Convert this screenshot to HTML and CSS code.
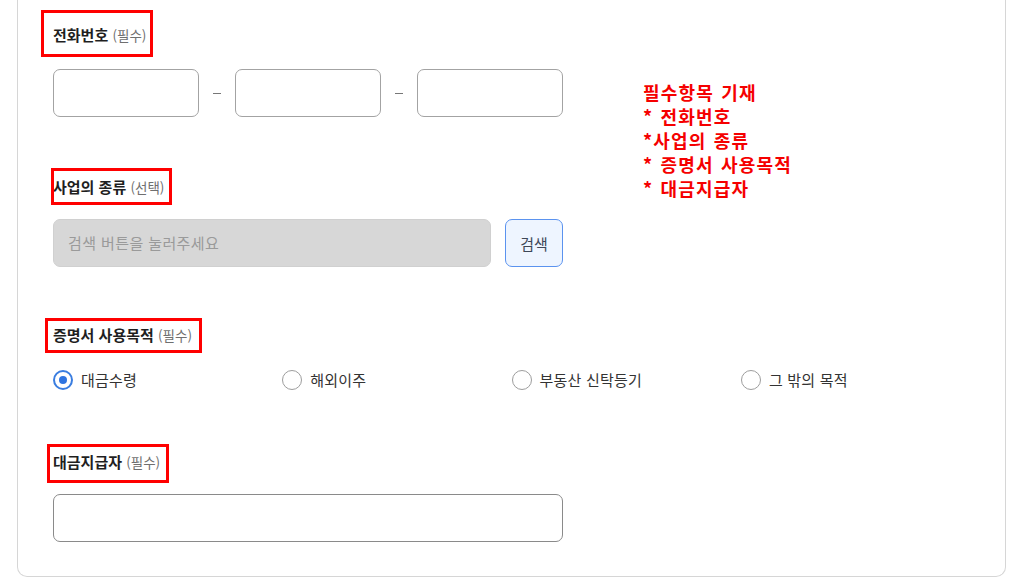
FILE: index.html
```html
<!DOCTYPE html>
<html lang="ko">
<head>
<meta charset="utf-8">
<title>신청서</title>
<link rel="stylesheet" href="styles.css">
</head>
<body>
<div class="card">
  <div class="top">
    <div class="left">
      <section class="sec sec-phone">
        <div class="label"><span class="lbl">전화번호 <small>(필수)</small><i class="mark m1"></i></span></div>
        <div class="phone">
          <input class="field" type="text">
          <span class="dash"></span>
          <input class="field" type="text">
          <span class="dash"></span>
          <input class="field" type="text">
        </div>
      </section>
      <section class="sec sec-biz">
        <div class="label"><span class="lbl">사업의 종류 <small>(선택)</small><i class="mark m2"></i></span></div>
        <div class="search">
          <div class="search-input">검색 버튼을 눌러주세요</div>
          <button class="search-btn" type="button">검색</button>
        </div>
      </section>
    </div>
    <div class="note">
      <p>필수항목 기재</p>
      <p>* 전화번호</p>
      <p>*사업의 종류</p>
      <p>* 증명서 사용목적</p>
      <p>* 대금지급자</p>
    </div>
  </div>
  <section class="sec sec-purpose">
    <div class="label"><span class="lbl">증명서 사용목적 <small>(필수)</small><i class="mark m3"></i></span></div>
    <div class="radios">
      <label class="radio checked"><span class="dot"></span>대금수령</label>
      <label class="radio"><span class="dot"></span>해외이주</label>
      <label class="radio"><span class="dot"></span>부동산 신탁등기</label>
      <label class="radio"><span class="dot"></span>그 밖의 목적</label>
    </div>
  </section>
  <section class="sec sec-payer">
    <div class="label"><span class="lbl">대금지급자 <small>(필수)</small><i class="mark m4"></i></span></div>
    <input class="field wide" type="text">
  </section>
</div>
</body>
</html>
```

FILE: styles.css
```css
* { box-sizing: border-box; }
html, body { margin: 0; padding: 0; background: #fff; }
body {
  font-family: "Noto Sans CJK KR", "Noto Sans", sans-serif;
  color: #222;
  width: 1024px;
  height: 579px;
  overflow: hidden;
}
.card {
  margin-left: 17px;
  width: 989px;
  border: 1px solid #d6d6d6;
  border-top: none;
  border-radius: 0 0 10px 10px;
  padding: 23px 35px 34px 35px;
}
.top { display: flex; }
.left { width: 510px; }
.label { height: 22px; line-height: 22px; }
.lbl {
  position: relative;
  display: inline-block;
  font-size: 15px;
  font-weight: 700;
  color: #1f1f1f;
}
.lbl small {
  font-size: 13.5px;
  font-weight: 400;
  color: #6f6f6f;
}
.mark {
  position: absolute;
  border: 3px solid #f00;
  pointer-events: none;
}
.m1 { left: -12px; top: -14px; width: 112px; height: 47px; }
.m2 { left: -2px; top: -8px; width: 121px; height: 37px; }
.m3 { left: -8px; top: -6px; width: 157px; height: 35px; }
.m4 { left: -6px; top: -7px; width: 122px; height: 39px; }

.field {
  display: block;
  height: 48px;
  border: 1px solid #a3a3a3;
  border-radius: 7px;
  background: #fff;
  padding: 0 12px;
  font: inherit;
  outline: none;
}
.phone { display: flex; align-items: center; margin-top: 24px; }
.phone .field { width: 146px; }
.dash {
  width: 36px;
  display: flex;
  justify-content: center;
}
.dash::before {
  content: "";
  width: 8px;
  height: 1px;
  background: #777;
}
.sec-biz { margin-top: 58px; }
.search { display: flex; gap: 14px; margin-top: 22px; }
.search-input {
  width: 438px;
  height: 48px;
  border-radius: 7px;
  background: #d7d7d7;
  border: 1px solid #d0d0d0;
  color: #9a9a9a;
  font-size: 15px;
  letter-spacing: 0.4px;
  line-height: 46px;
  padding-left: 14px;
}
.search-btn {
  width: 58px;
  height: 48px;
  border: 1px solid #5b93ef;
  border-radius: 7px;
  background: #eef5ff;
  color: #3d4757;
  font-family: inherit;
  font-size: 15px;
  padding: 0;
}
.note {
  margin-left: 80px;
  margin-top: 57px;
  color: #f50000;
  font-size: 18px;
  font-weight: 700;
  line-height: 24px;
  letter-spacing: 1.2px;
  word-spacing: 1px;
}
.note p { margin: 0; }

.sec-purpose { margin-top: 56px; }
.radios {
  display: grid;
  grid-template-columns: repeat(4, 229.3px);
  margin-top: 24px;
  height: 22px;
}
.radio {
  display: flex;
  align-items: center;
  gap: 8px;
  font-size: 15px;
  color: #333;
  letter-spacing: 0.2px;
  line-height: 22px;
}
.dot {
  width: 20px;
  height: 20px;
  border: 1.5px solid #9d9d9d;
  border-radius: 50%;
  display: flex;
  align-items: center;
  justify-content: center;
  flex: none;
}
.radio.checked .dot { border: 2px solid #3a7de0; }
.radio.checked .dot::after {
  content: "";
  width: 8px;
  height: 8px;
  border-radius: 50%;
  background: #2f74e0;
}
.sec-payer { margin-top: 59px; }
.sec-payer .field { margin-top: 22px; }
.field.wide { width: 510px; border-color: #8a8a8a; }
```
